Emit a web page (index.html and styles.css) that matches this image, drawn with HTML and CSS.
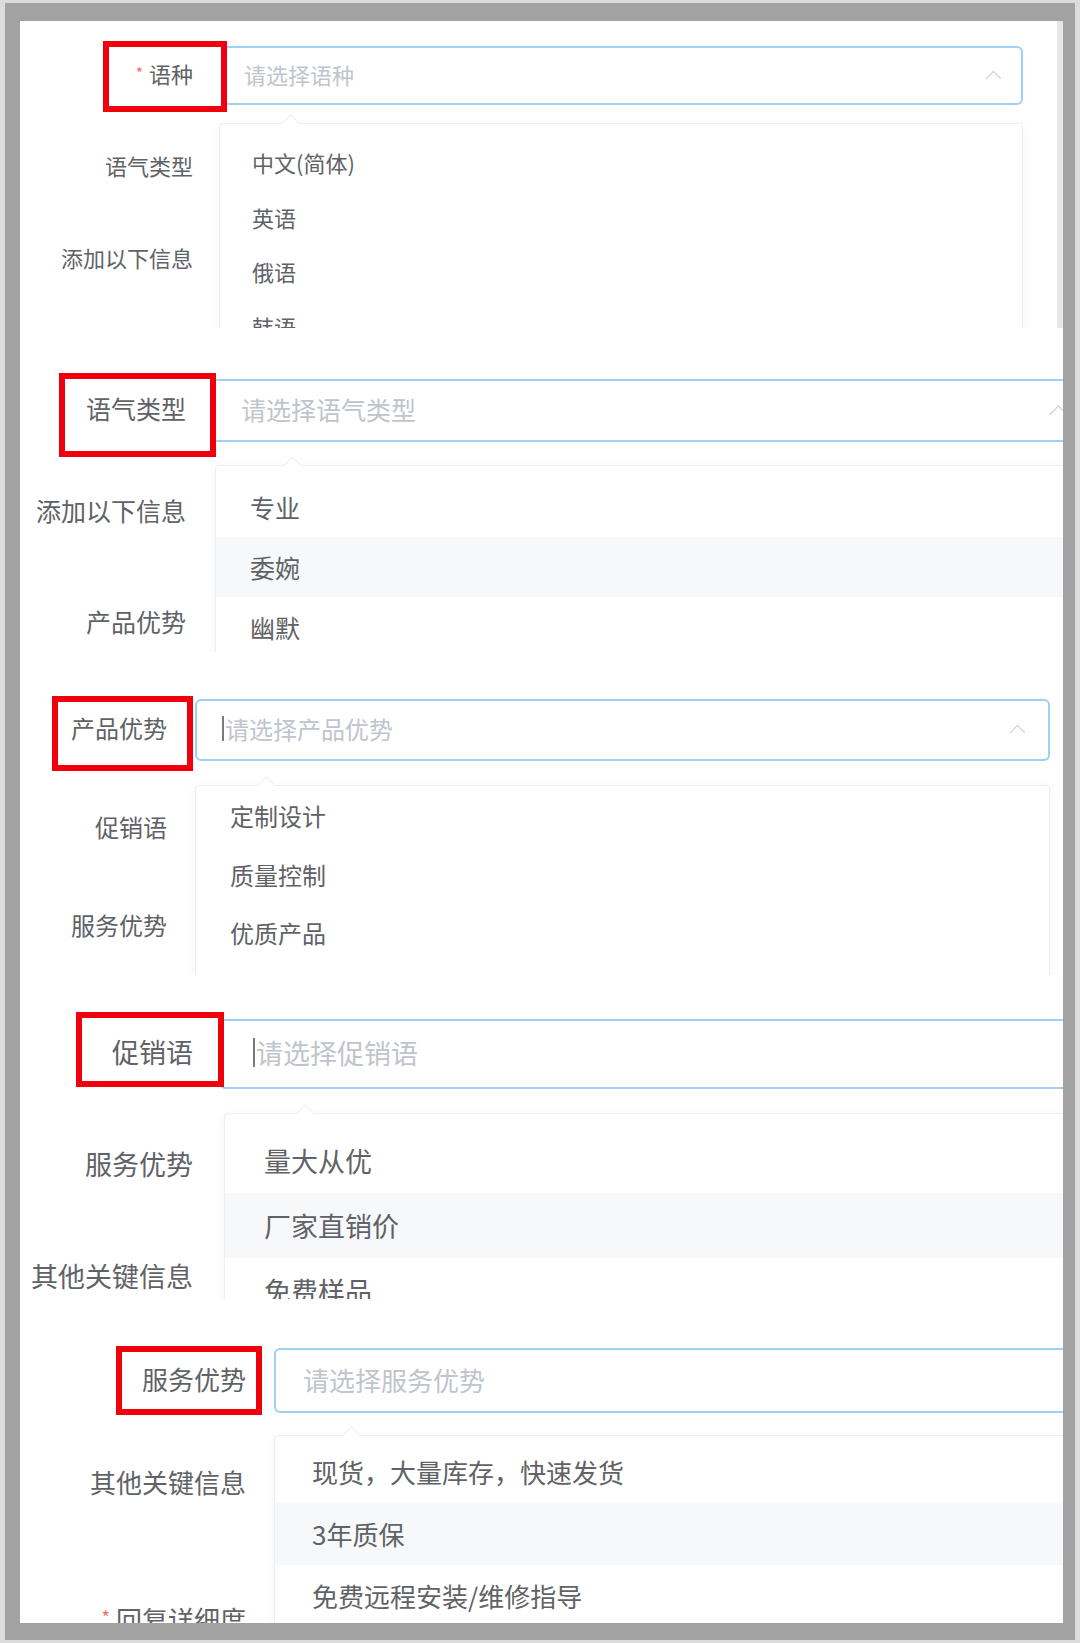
FILE: index.html
```html
<!DOCTYPE html>
<html lang="zh-CN">
<head>
    <meta charset="UTF-8">
    <meta name="viewport" content="width=device-width, initial-scale=1.0">
    <title>表单下拉选项</title>
    <link rel="stylesheet" href="styles.css">
</head>
<body>
    <div class="frame">

        <!-- 语种 -->
        <section class="shot s1">
            <div class="labels">
                <div class="lbl"><span class="req">*</span>语种</div>
                <div class="lbl">语气类型</div>
                <div class="lbl">添加以下信息</div>
            </div>
            <div class="field">
                <div class="select">
                    <span class="placeholder">请选择语种</span>
                    <span class="arrow"></span>
                </div>
                <div class="dropdown">
                    <ul>
                        <li>中文(简体)</li>
                        <li>英语</li>
                        <li>俄语</li>
                        <li>韩语</li>
                    </ul>
                </div>
            </div>
            <div class="mark"></div>
        </section>

        <!-- 语气类型 -->
        <section class="shot s2">
            <div class="labels">
                <div class="lbl">语气类型</div>
                <div class="lbl">添加以下信息</div>
                <div class="lbl">产品优势</div>
            </div>
            <div class="field">
                <div class="select">
                    <span class="placeholder">请选择语气类型</span>
                    <span class="arrow"></span>
                </div>
                <div class="dropdown">
                    <ul>
                        <li>专业</li>
                        <li class="hover">委婉</li>
                        <li>幽默</li>
                    </ul>
                </div>
            </div>
            <div class="mark"></div>
        </section>

        <!-- 产品优势 -->
        <section class="shot s3">
            <div class="labels">
                <div class="lbl">产品优势</div>
                <div class="lbl">促销语</div>
                <div class="lbl">服务优势</div>
            </div>
            <div class="field">
                <div class="select">
                    <span class="caret"></span>
                    <span class="placeholder">请选择产品优势</span>
                    <span class="arrow"></span>
                </div>
                <div class="dropdown">
                    <ul>
                        <li>定制设计</li>
                        <li>质量控制</li>
                        <li>优质产品</li>
                    </ul>
                </div>
            </div>
            <div class="mark"></div>
        </section>

        <!-- 促销语 -->
        <section class="shot s4">
            <div class="labels">
                <div class="lbl">促销语</div>
                <div class="lbl">服务优势</div>
                <div class="lbl">其他关键信息</div>
            </div>
            <div class="field">
                <div class="select">
                    <span class="caret"></span>
                    <span class="placeholder">请选择促销语</span>
                </div>
                <div class="dropdown">
                    <ul>
                        <li>量大从优</li>
                        <li class="hover">厂家直销价</li>
                        <li>免费样品</li>
                    </ul>
                </div>
            </div>
            <div class="mark"></div>
        </section>

        <!-- 服务优势 -->
        <section class="shot s5">
            <div class="labels">
                <div class="lbl">服务优势</div>
                <div class="lbl">其他关键信息</div>
                <div class="lbl last"><span class="req">*</span>回复详细度</div>
            </div>
            <div class="field">
                <div class="select">
                    <span class="placeholder">请选择服务优势</span>
                </div>
                <div class="dropdown">
                    <ul>
                        <li>现货，大量库存，快速发货</li>
                        <li class="hover">3年质保</li>
                        <li>免费远程安装/维修指导</li>
                    </ul>
                </div>
            </div>
            <div class="mark"></div>
        </section>

    </div>
</body>
</html>
```

FILE: styles.css
```css
body {
    margin: 0;
    padding: 3px 5px;
    background: #dcdcdc;
    font-family: "Noto Sans CJK SC", "Noto Sans", sans-serif;
    color: #606266;
}

.frame {
    background: #fff;
    border-style: solid;
    border-color: #a2a2a2;
    border-width: 18px 12px 17px 15px;
    height: 1602px;
    overflow: hidden;
}

/* one cropped screenshot */
.shot {
    position: relative;
    display: flex;
    overflow: hidden;
    font-size: var(--fs);
}

.labels {
    flex: none;
    box-sizing: border-box;
    width: var(--label-w);
    padding-top: var(--top);
    padding-right: var(--label-pad);
    text-align: right;
    white-space: nowrap;
}

.lbl {
    height: var(--ih);
    line-height: calc(var(--ih) - 4px);
    margin-bottom: var(--gap);
}

.req {
    color: #f56c6c;
    font-size: 0.7em;
    margin-right: 6px;
    vertical-align: top;
    position: relative;
    top: -1px;
}

.field {
    flex: none;
    width: var(--field-w);
    margin-left: var(--shift);
    padding-top: var(--top);
}

.select {
    position: relative;
    box-sizing: border-box;
    height: var(--ih);
    padding-left: var(--ph-pad);
    padding-bottom: 3px;
    border: 2px solid #9fcff2;
    border-radius: 6px;
    display: flex;
    align-items: center;
    background: #fff;
}

.placeholder {
    color: #c0c4cc;
    white-space: nowrap;
}

.caret {
    width: 2px;
    height: 1.05em;
    background: #7a7a7a;
    margin-right: 1px;
}

.arrow {
    position: absolute;
    right: var(--arrow-r);
    top: 50%;
    width: 10px;
    height: 10px;
    margin-top: -3px;
    border-top: 1.5px solid #c8cbd0;
    border-left: 1.5px solid #c8cbd0;
    transform: rotate(45deg);
}

.dropdown {
    position: relative;
    box-sizing: border-box;
    margin-top: var(--dd-gap);
    margin-left: var(--dd-shift);
    width: var(--dd-w);
    background: #fff;
    border: 1px solid #eceef2;
    border-radius: 4px;
    box-shadow: 0 2px 10px rgba(0, 0, 0, 0.05);
    padding-top: var(--dd-top);
    padding-bottom: 200px;
}

.dropdown::before {
    content: "";
    position: absolute;
    top: -7px;
    left: var(--notch, 60px);
    width: 12px;
    height: 12px;
    background: #fff;
    border-top: 1px solid #eceef2;
    border-left: 1px solid #eceef2;
    transform: rotate(45deg);
}

.dropdown ul {
    list-style: none;
    margin: 0;
    padding: 0;
}

.dropdown li {
    height: var(--item-h);
    line-height: var(--item-h);
    padding-left: var(--item-pad);
    white-space: nowrap;
}

.dropdown li.hover {
    background: #f6f8fa;
}

/* red annotation box drawn over the screenshot */
.mark {
    position: absolute;
    box-sizing: border-box;
    border: 6px solid #f0000c;
}

/* 1 — 语种 */
.s1 {
    height: 307px;
    border-right: 6px solid #e6e6e6;
    --fs: 22px;
    --label-w: 207px;
    --label-pad: 34px;
    --top: 25px;
    --ih: 59px;
    --gap: 33px;
    --field-w: 801px;
    --shift: -5px;
    --ph-pad: 20px;
    --arrow-r: 22px;
    --dd-gap: 18px;
    --dd-shift: -3px;
    --dd-w: 804px;
    --dd-top: 11px;
    --item-h: 54.5px;
    --item-pad: 32px;
    --notch: 64px;
}

.s1 .mark { left: 83px; top: 20px; width: 124px; height: 71px; }

/* 2 — 语气类型 */
.s2 {
    height: 324px;
    --fs: 25px;
    --label-w: 197px;
    --label-pad: 31px;
    --top: 51px;
    --ih: 63px;
    --gap: 48px;
    --field-w: 881px;
    --shift: -5px;
    --ph-pad: 27px;
    --arrow-r: 26px;
    --dd-gap: 23px;
    --dd-shift: 3px;
    --dd-w: 900px;
    --dd-top: 10.5px;
    --item-h: 60px;
    --item-pad: 34px;
    --notch: 70px;
}

.s2 .lbl:first-child { margin-bottom: 38.5px; }
.s2 .arrow { width: 12px; height: 12px; }
.s2 .mark { left: 39px; top: 45px; width: 157px; height: 84px; }

/* 3 — 产品优势 */
.s3 {
    height: 323px;
    --fs: 24px;
    --label-w: 175px;
    --label-pad: 28px;
    --top: 47px;
    --ih: 62px;
    --gap: 36.5px;
    --field-w: 855px;
    --shift: 0px;
    --ph-pad: 25px;
    --arrow-r: 25px;
    --dd-gap: 24px;
    --dd-shift: 0px;
    --dd-w: 855px;
    --dd-top: 1px;
    --item-h: 58.5px;
    --item-pad: 34px;
    --notch: 64px;
}

.s3 .mark { left: 32px; top: 44px; width: 141px; height: 75px; }

/* 4 — 促销语 */
.s4 {
    height: 324px;
    --fs: 27px;
    --label-w: 204px;
    --label-pad: 31px;
    --top: 44px;
    --ih: 70px;
    --gap: 42px;
    --field-w: 900px;
    --shift: -5px;
    --ph-pad: 32px;
    --arrow-r: 30px;
    --dd-gap: 24px;
    --dd-shift: 5px;
    --dd-w: 900px;
    --dd-top: 14px;
    --item-h: 65px;
    --item-pad: 39px;
    --notch: 74px;
}

.s4 .mark { left: 56px; top: 37px; width: 148px; height: 75px; }

/* 5 — 服务优势 */
.s5 {
    height: 324px;
    --fs: 26px;
    --label-w: 254px;
    --label-pad: 28px;
    --top: 49px;
    --ih: 65px;
    --gap: 38px;
    --field-w: 900px;
    --shift: 0px;
    --ph-pad: 27px;
    --arrow-r: 30px;
    --dd-gap: 22px;
    --dd-shift: 0px;
    --dd-w: 900px;
    --dd-top: 4.5px;
    --item-h: 62px;
    --item-pad: 37px;
    --notch: 70px;
}

.s5 .lbl.last { margin-top: 72px; }
.s5 .mark { left: 96px; top: 47px; width: 146px; height: 69px; }
```
